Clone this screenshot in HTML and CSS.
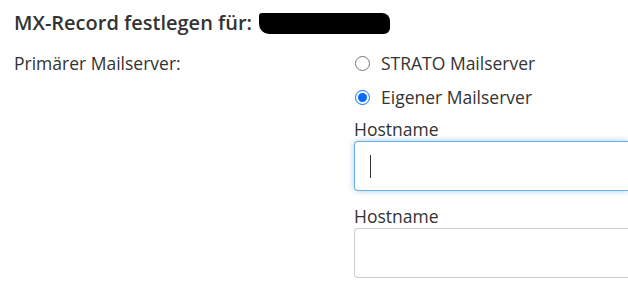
FILE: index.html
```html
<!DOCTYPE html>
<html>
<head>
    <title>MX-Record</title>
    <link rel="stylesheet" href="styles.css">
</head>
<body>
    <div class="panel">
        <h2 class="title">MX-Record festlegen für: <span class="redacted"></span></h2>
        <div class="row">
            <div class="row-label">Primärer Mailserver:</div>
            <div class="row-field">
                <label class="radio"><input type="radio" name="mx"> STRATO Mailserver</label>
                <label class="radio"><input type="radio" name="mx" checked> Eigener Mailserver</label>
                <label class="field-label" for="host1">Hostname</label>
                <div class="input focused" id="host1"><span class="caret"></span></div>
                <label class="field-label second" for="host2">Hostname</label>
                <div class="input" id="host2"></div>
            </div>
        </div>
    </div>
</body>
</html>
```

FILE: styles.css
```css
body {
    font-family: "Open Sans", sans-serif;
    background-color: #fff;
    color: #333;
    margin: 0;
    overflow: hidden;
}
.panel {
    padding: 9px 0 0 14px;
}
.title {
    font-size: 20px;
    font-weight: 600;
    color: #333;
    margin: 0 0 9px 0;
    line-height: 28px;
    display: flex;
    align-items: center;
}
.redacted {
    display: inline-block;
    width: 131px;
    height: 21px;
    background: #000;
    margin-left: 7px;
    margin-top: 1px;
    border-radius: 3px 8px 6px 10px;
}
.row {
    display: flex;
    font-size: 17.5px;
}
.row-label {
    width: 340px;
    flex-shrink: 0;
    line-height: 34px;
}
.row-field {
    flex: 1;
    display: flex;
    flex-direction: column;
}
.radio {
    display: flex;
    align-items: center;
    height: 34px;
}
.radio input {
    width: 15px;
    height: 15px;
    margin: 0 11px 0 1px;
    accent-color: #0a6cff;
}
.field-label {
    line-height: 24px;
    margin-top: 3px;
}
.field-label.second {
    margin-top: 13px;
}
.input {
    height: 48px;
    border: 1px solid #ccc;
    border-right-width: 0;
    border-radius: 4px 0 0 4px;
    display: flex;
    align-items: center;
    padding-left: 15px;
}
.input.focused {
    border-color: #66afe9;
    box-shadow: 0 0 6px rgba(102, 175, 233, 0.6);
}
.caret {
    width: 1px;
    height: 23px;
    background: #333;
}
```
